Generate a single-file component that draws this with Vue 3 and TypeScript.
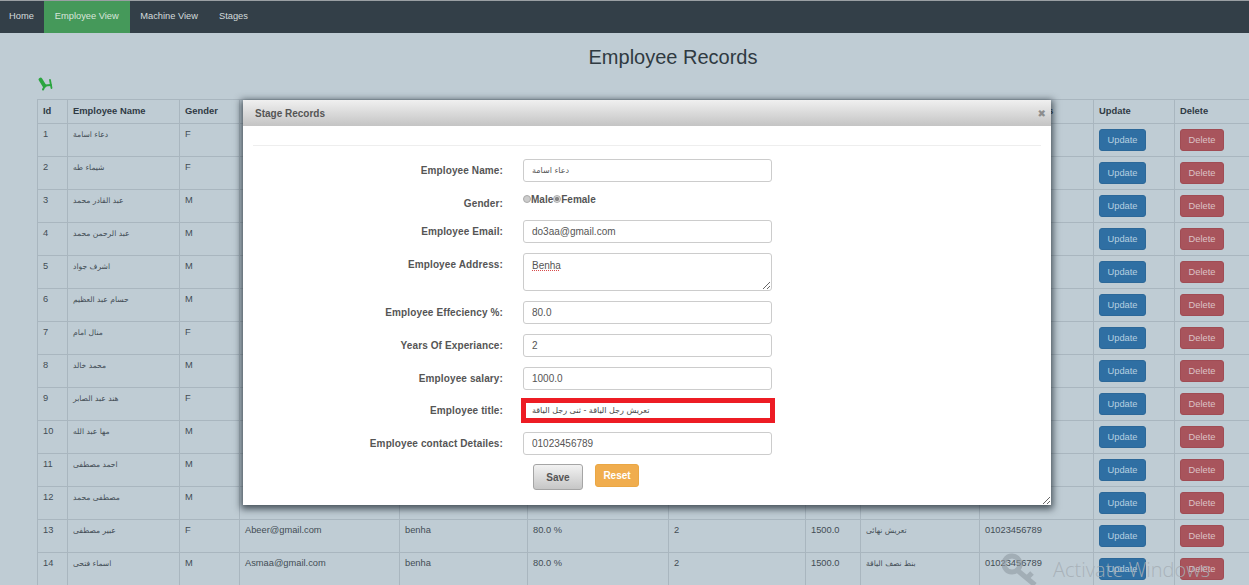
<script setup lang="ts">
interface Employee {
  id: number
  name: string
  gender: string
  email: string
  address: string
  efficiency: string
  years: string
  salary: string
  title: string
  contact: string
}

const navItems = ['Home', 'Employee View', 'Machine View', 'Stages']

const headers = [
  'Id', 'Employee Name', 'Gender', 'Employee Email', 'Address', 'Efficiency', 'Years Of Experiance',
  'Salary', 'Title', 'Contact Details', 'Update', 'Delete',
]

const colWidths = [30, 112, 60, 160, 128, 141, 137, 55, 119, 114, 81, 90]

const people: [string, string, string, string][] = [
  ['دعاء اسامة', 'F', 'do3aa@gmail.com', 'تعريش رجل الياقة'],
  ['شيماء طه', 'F', 'shimaa@gmail.com', 'تعريش نهائى'],
  ['عبد القادر محمد', 'M', 'abdo@gmail.com', 'تعريش نهائى'],
  ['عبد الرحمن محمد', 'M', 'abdo@gmail.com', 'تعريش نهائى'],
  ['اشرف جواد', 'M', 'ashraf@gmail.com', 'تعريش نهائى'],
  ['حسام عبد العظيم', 'M', 'hossam@gmail.com', 'تعريش نهائى'],
  ['منال امام', 'F', 'manal@gmail.com', 'تعريش نهائى'],
  ['محمد خالد', 'M', 'mohamed@gmail.com', 'تعريش نهائى'],
  ['هند عبد الصابر', 'F', 'hend@gmail.com', 'تعريش نهائى'],
  ['مها عبد الله', 'M', 'maha@gmail.com', 'تعريش نهائى'],
  ['احمد مصطفى', 'M', 'ahmed@gmail.com', 'تعريش نهائى'],
  ['مصطفى محمد', 'M', 'mostafa@gmail.com', 'تعريش نهائى'],
  ['عبير مصطفى', 'F', 'Abeer@gmail.com', 'تعريش نهائى'],
  ['اسماء فتحى', 'M', 'Asmaa@gmail.com', 'بنط نصف الياقة'],
]

const employees: Employee[] = people.map((p, i) => ({
  id: i + 1,
  name: p[0],
  gender: p[1],
  email: p[2],
  address: 'benha',
  efficiency: '80.0 %',
  years: '2',
  salary: '1500.0',
  title: p[3],
  contact: '01023456789',
}))
</script>

<template>
  <div class="page">
    <nav class="navbar">
      <a v-for="item in navItems" :key="item" :class="{ active: item === 'Employee View' }">{{ item }}</a>
    </nav>

    <h1>Employee Records</h1>

    <div class="add-icon">
      <svg width="16" height="14" viewBox="0 0 16 14" fill="none" stroke="#2ba53f" stroke-linecap="round">
        <path d="M2.5 2.5 L6.5 9" stroke-width="3.8" />
        <path d="M7 8.5 L13 8" stroke-width="1.8" />
        <path d="M12 3 L13.5 11" stroke-width="1.8" />
        <path d="M6 10.5 L5 12.5" stroke-width="2" />
      </svg>
    </div>

    <table>
      <colgroup>
        <col v-for="(w, i) in colWidths" :key="i" :style="{ width: w + 'px' }" />
      </colgroup>
      <thead>
        <tr>
          <th v-for="h in headers" :key="h">{{ h }}</th>
        </tr>
      </thead>
      <tbody>
        <tr v-for="e in employees" :key="e.id">
          <td>{{ e.id }}</td>
          <td class="ar">{{ e.name }}</td>
          <td>{{ e.gender }}</td>
          <td>{{ e.email }}</td>
          <td>{{ e.address }}</td>
          <td>{{ e.efficiency }}</td>
          <td>{{ e.years }}</td>
          <td>{{ e.salary }}</td>
          <td class="ar">{{ e.title }}</td>
          <td>{{ e.contact }}</td>
          <td><button class="btn update">Update</button></td>
          <td><button class="btn delete">Delete</button></td>
        </tr>
      </tbody>
    </table>

    <div class="modal">
      <div class="modal-head">
        <span>Stage Records</span>
        <span class="close">✖</span>
      </div>
      <div class="modal-body">
        <hr />
        <div class="row">
          <label>Employee Name:</label>
          <input class="ar-input" value="دعاء اسامة" />
        </div>
        <div class="row gender-row">
          <label>Gender:</label>
          <div class="radios">
            <input type="radio" name="gender" />Male<input type="radio" name="gender" checked />Female
          </div>
        </div>
        <div class="row">
          <label>Employee Email:</label>
          <input value="do3aa@gmail.com" />
        </div>
        <div class="row">
          <label class="top">Employee Address:</label>
          <div class="textarea"><span>Benha</span></div>
        </div>
        <div class="row">
          <label>Employee Effeciency %:</label>
          <input value="80.0" />
        </div>
        <div class="row">
          <label>Years Of Experiance:</label>
          <input value="2" />
        </div>
        <div class="row salary-row">
          <label>Employee salary:</label>
          <input value="1000.0" />
        </div>
        <div class="row title-row">
          <label>Employee title:</label>
          <input class="highlighted" value="تعريش رجل الياقة - ثنى رجل الياقة" />
        </div>
        <div class="row contact-row">
          <label>Employee contact Detailes:</label>
          <input value="01023456789" />
        </div>
        <div class="actions">
          <button class="save">Save</button>
          <button class="reset">Reset</button>
        </div>
      </div>
    </div>

    <div class="watermark">
      <svg width="40" height="33" viewBox="0 0 40 33" fill="none" stroke="#8f9aa2" stroke-opacity="0.6">
        <path d="M10 4 a8 8 0 1 0 0.01 0 Z M15 18 L33 33 M25 26 L30 21" stroke-width="5" />
      </svg>
      <span>Activate Windows</span>
    </div>
  </div>
</template>

<style scoped>
.page {
  position: relative;
  height: 585px;
  overflow: hidden;
  background: #bfccd4;
  font-family: "Liberation Sans", "DejaVu Sans", sans-serif;
  font-size: 10px;
  color: #3a444c;
}

.navbar {
  display: flex;
  height: 32px;
  background: #333f48;
  border-top: 1px solid #9a9fa3;
}

.navbar a {
  padding: 0 10.5px;
  line-height: 30px;
  font-size: 9.3px;
  color: #d4dbdc;
}

.navbar a:first-child {
  padding: 0 10px 0 9px;
}

.navbar a.active {
  padding: 0 11px;
  background: #45995a;
  color: #d9e6da;
}

h1 {
  margin: 12px 0 0 97px;
  font-size: 20px;
  line-height: 25px;
  font-weight: 400;
  text-align: center;
  color: #2f3a42;
}

.add-icon {
  height: 14px;
  margin: 7px 0 8px 38px;
}

table {
  width: 1227px;
  margin-left: 37px;
  border-collapse: collapse;
  table-layout: fixed;
}

th,
td {
  border: 1px solid #a9b6bf;
  text-align: left;
  vertical-align: top;
  padding: 5px 5px 0;
  white-space: nowrap;
  overflow: hidden;
}

th {
  height: 24px;
  box-sizing: border-box;
  line-height: 12px;
  font-weight: 700;
  font-size: 9.4px;
  color: #2f3a44;
}

td {
  height: 33px;
  box-sizing: border-box;
  line-height: 11px;
  font-size: 9.3px;
  color: #434d55;
}

td.ar {
  font-size: 7.6px;
  font-family: "DejaVu Sans", sans-serif;
}

.btn {
  display: block;
  height: 22px;
  margin: 0;
  padding: 0;
  border: 1px solid transparent;
  border-radius: 3px;
  font: 9.3px "Liberation Sans", sans-serif;
}

.update {
  width: 47px;
  background: #2f6fa3;
  border-color: #2c6899;
  color: #b7d0e0;
}

.delete {
  width: 44px;
  background: #a8545c;
  border-color: #a04c54;
  color: #dcc3c6;
}

.modal {
  position: absolute;
  left: 243px;
  top: 100px;
  width: 808px;
  height: 405px;
  overflow: hidden;
  resize: both;
  background: #fff;
  box-shadow: 0 2px 7px 2px rgba(30, 40, 48, 0.75);
}

.modal-head {
  display: flex;
  justify-content: space-between;
  align-items: center;
  height: 26px;
  padding: 0 5px 0 12px;
  background: linear-gradient(#f0f0f0, #c4c4c4);
  font-size: 10px;
  font-weight: 700;
  color: #555;
}

.close {
  font-size: 10px;
  color: #8d8d8d;
}

.modal-body hr {
  height: 1px;
  margin: 19px 10px 13px;
  border: 0;
  background: #eee;
}

.row {
  display: flex;
  align-items: center;
  margin-bottom: 10px;
}

.row label {
  flex: none;
  width: 260px;
  margin-right: 20px;
  text-align: right;
  font-weight: 700;
  font-size: 10px;
  letter-spacing: 0.12px;
  color: #555;
}

.row label.top {
  align-self: flex-start;
  padding-top: 6px;
}

.row input:not([type="radio"]) {
  box-sizing: border-box;
  width: 249px;
  height: 23px;
  padding: 0 8px;
  border: 1px solid #ccc;
  border-radius: 3px;
  font: 10px "Liberation Sans", sans-serif;
  color: #555;
  outline: none;
}

.row input.ar-input {
  font: 8px "DejaVu Sans", sans-serif;
}

.gender-row {
  align-items: flex-start;
  height: 18px;
}

.gender-row label {
  padding-top: 6px;
}

.radios {
  display: flex;
  align-items: center;
  padding-top: 2px;
  font-weight: 700;
  font-size: 10px;
  color: #555;
}

.radios input {
  appearance: none;
  width: 8px;
  height: 8px;
  margin: 0 0 2px 0;
  border: 1px solid #aaa;
  border-radius: 50%;
  background: #ccc;
}

.radios input:checked {
  background: radial-gradient(#888 45%, #ddd 55%);
}

.textarea {
  box-sizing: border-box;
  width: 249px;
  height: 38px;
  padding: 6px 8px;
  overflow: hidden;
  resize: both;
  border: 1px solid #ccc;
  border-radius: 3px;
  font-size: 10px;
  color: #555;
}

.textarea span {
  text-decoration: underline dotted #d84a4a 1px;
}

.salary-row {
  margin-bottom: 8px;
}

.title-row,
.contact-row {
  margin-bottom: 9px;
}

.row input.highlighted {
  width: 254px;
  height: 25px;
  margin-left: -2px;
  padding: 0 6px;
  border: 5px solid #ed1c24;
  border-radius: 0;
  font: 8px "DejaVu Sans", sans-serif;
  color: #444;
}

.actions {
  display: flex;
  align-items: flex-start;
  gap: 12px;
  margin-left: 290px;
}

.actions button {
  box-sizing: border-box;
  padding: 0;
  border-radius: 3px;
  font: 700 10px "Liberation Sans", sans-serif;
}

.save {
  width: 50px;
  height: 26px;
  border: 1px solid #a5a5a5;
  background: linear-gradient(#f2f2f2, #c6c6c6);
  color: #555;
}

.reset {
  width: 44px;
  height: 23px;
  border: 1px solid #eaa744;
  background: #f0ad4e;
  color: #fff;
}

.watermark {
  position: absolute;
  left: 1002px;
  top: 552px;
  display: flex;
  align-items: flex-start;
  pointer-events: none;
}

.watermark span {
  margin: 4px 0 0 11px;
  font: 300 20px "Open Sans", sans-serif;
  white-space: nowrap;
  color: rgba(166, 175, 182, 0.9);
}
</style>

<style>
html,
body {
  margin: 0;
  overflow: hidden;
}
</style>
